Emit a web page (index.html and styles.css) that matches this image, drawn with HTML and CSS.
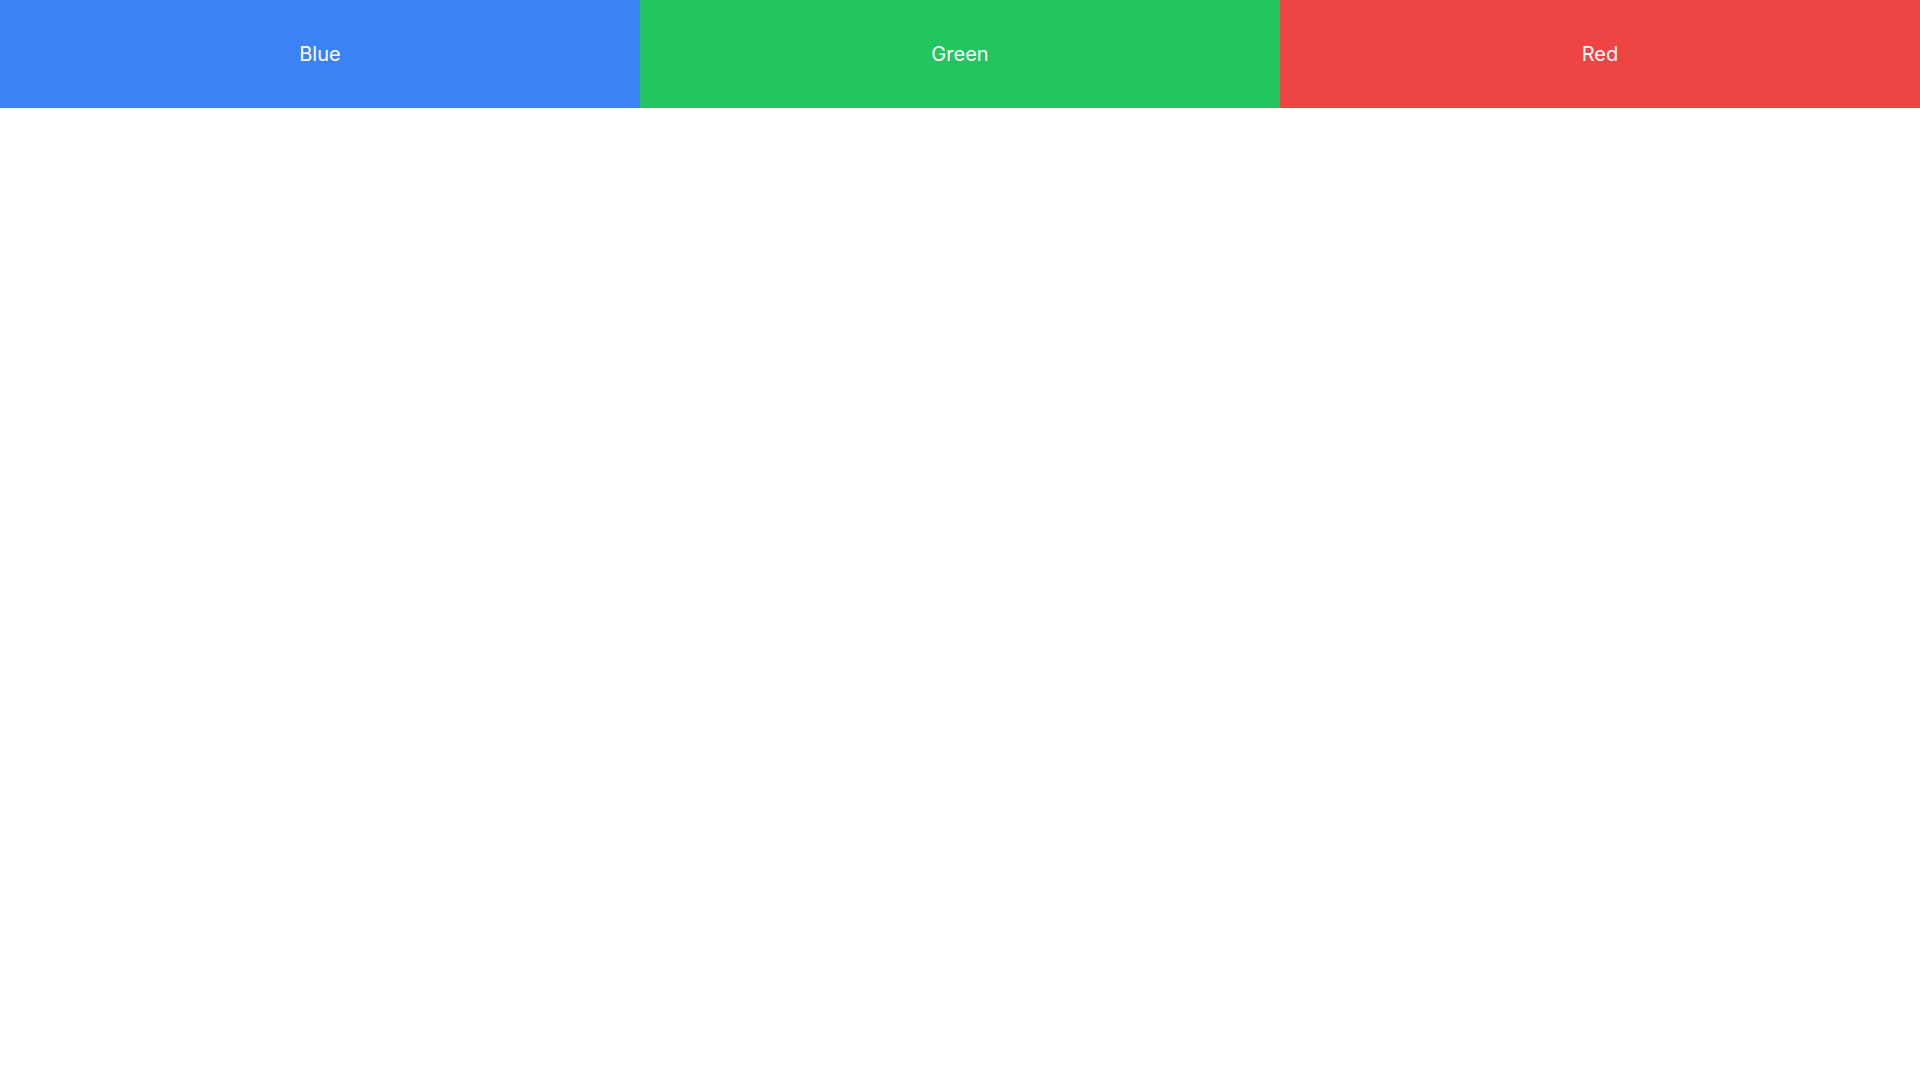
FILE: index.html
```html
<!DOCTYPE html>
<html>
<head>
<meta charset="utf-8">
<link rel="stylesheet" href="styles.css">
</head>
<body>
<div class="bars">
  <div class="bar blue">Blue</div>
  <div class="bar green">Green</div>
  <div class="bar red">Red</div>
</div>
</body>
</html>
```
FILE: styles.css
```css
html, body { margin: 0; padding: 0; background: #fff; }
body { font-family: Inter, "Noto Sans", sans-serif; }
.bars { display: grid; grid-template-columns: repeat(3, 1fr); }
.bar { height: 108px; display: flex; align-items: center; justify-content: center; color: #fff; font-size: 20px; }
.blue { background: #3b82f6; }
.green { background: #22c55e; }
.red { background: #ef4444; }
```
